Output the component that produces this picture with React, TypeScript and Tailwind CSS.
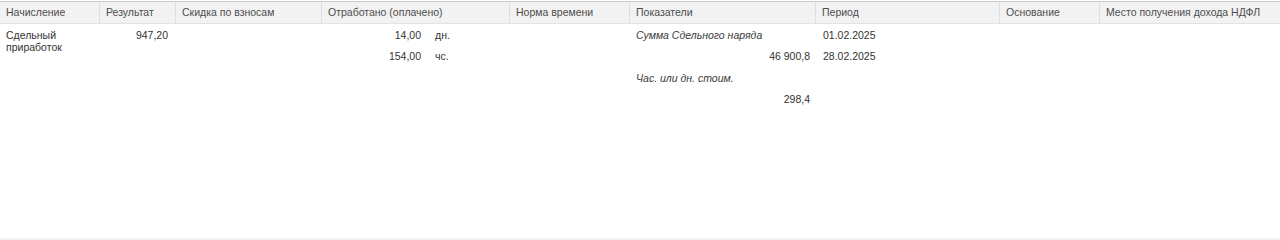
const cols = [
  { title: "Начисление", w: "w-[99px]" },
  { title: "Результат", w: "w-[76px]" },
  { title: "Скидка по взносам", w: "w-[146px]" },
  { title: "Отработано (оплачено)", w: "w-[188px]" },
  { title: "Норма времени", w: "w-[120px]" },
  { title: "Показатели", w: "w-[186px]" },
  { title: "Период", w: "w-[184px]" },
  { title: "Основание", w: "w-[100px]" },
  { title: "Место получения дохода НДФЛ", w: "flex-1" },
];

function Line({ children, className = "" }: { children?: React.ReactNode; className?: string }) {
  return <div className={`flex h-[21.5px] items-center ${className}`}>{children}</div>;
}

export default function App() {
  return (
    <div
      className="flex h-[240px] w-[1280px] flex-col border-b-2 border-[#f2f2f2] bg-white text-[10.5px] text-[#333]"
      style={{ fontFamily: '"Liberation Sans", Arial, sans-serif' }}
    >
      <div className="mt-[1px] flex h-[23px] border-y border-t-[#c9c9c9] border-b-[#e3e3e3] bg-[#f2f2f2] text-[#4d4d4d]">
        {cols.map((c, i) => (
          <div
            key={c.title}
            className={`flex items-center px-[6px] ${c.w} ${i > 0 ? "border-l border-[#dedede]" : ""}`}
          >
            <span className="truncate">{c.title}</span>
          </div>
        ))}
      </div>

      <div className="flex flex-1 pt-[1px]">
        {/* Начисление */}
        <div className="w-[99px] px-[6px] pt-[4px] leading-[12px]">
          Сдельный
          <br />
          приработок
        </div>
        {/* Результат */}
        <div className="w-[76px] pr-[7px]">
          <Line className="justify-end">947,20</Line>
        </div>
        {/* Скидка */}
        <div className="w-[146px]" />
        {/* Отработано */}
        <div className="w-[188px]">
          <Line>
            <span className="w-[100px] text-right">14,00</span>
            <span className="ml-[14px]">дн.</span>
          </Line>
          <Line>
            <span className="w-[100px] text-right">154,00</span>
            <span className="ml-[14px]">чс.</span>
          </Line>
        </div>
        {/* Норма времени */}
        <div className="w-[120px]" />
        {/* Показатели */}
        <div className="w-[186px] pl-[7px] pr-[5px]">
          <Line className="italic text-[#3a3a3a]">Сумма Сдельного наряда</Line>
          <Line className="justify-end">46 900,8</Line>
          <Line className="italic text-[#3a3a3a]">Час. или дн. стоим.</Line>
          <Line className="justify-end">298,4</Line>
        </div>
        {/* Период */}
        <div className="w-[184px] pl-[8px]">
          <Line>01.02.2025</Line>
          <Line>28.02.2025</Line>
        </div>
        <div className="w-[100px]" />
        <div className="flex-1" />
      </div>
    </div>
  );
}
